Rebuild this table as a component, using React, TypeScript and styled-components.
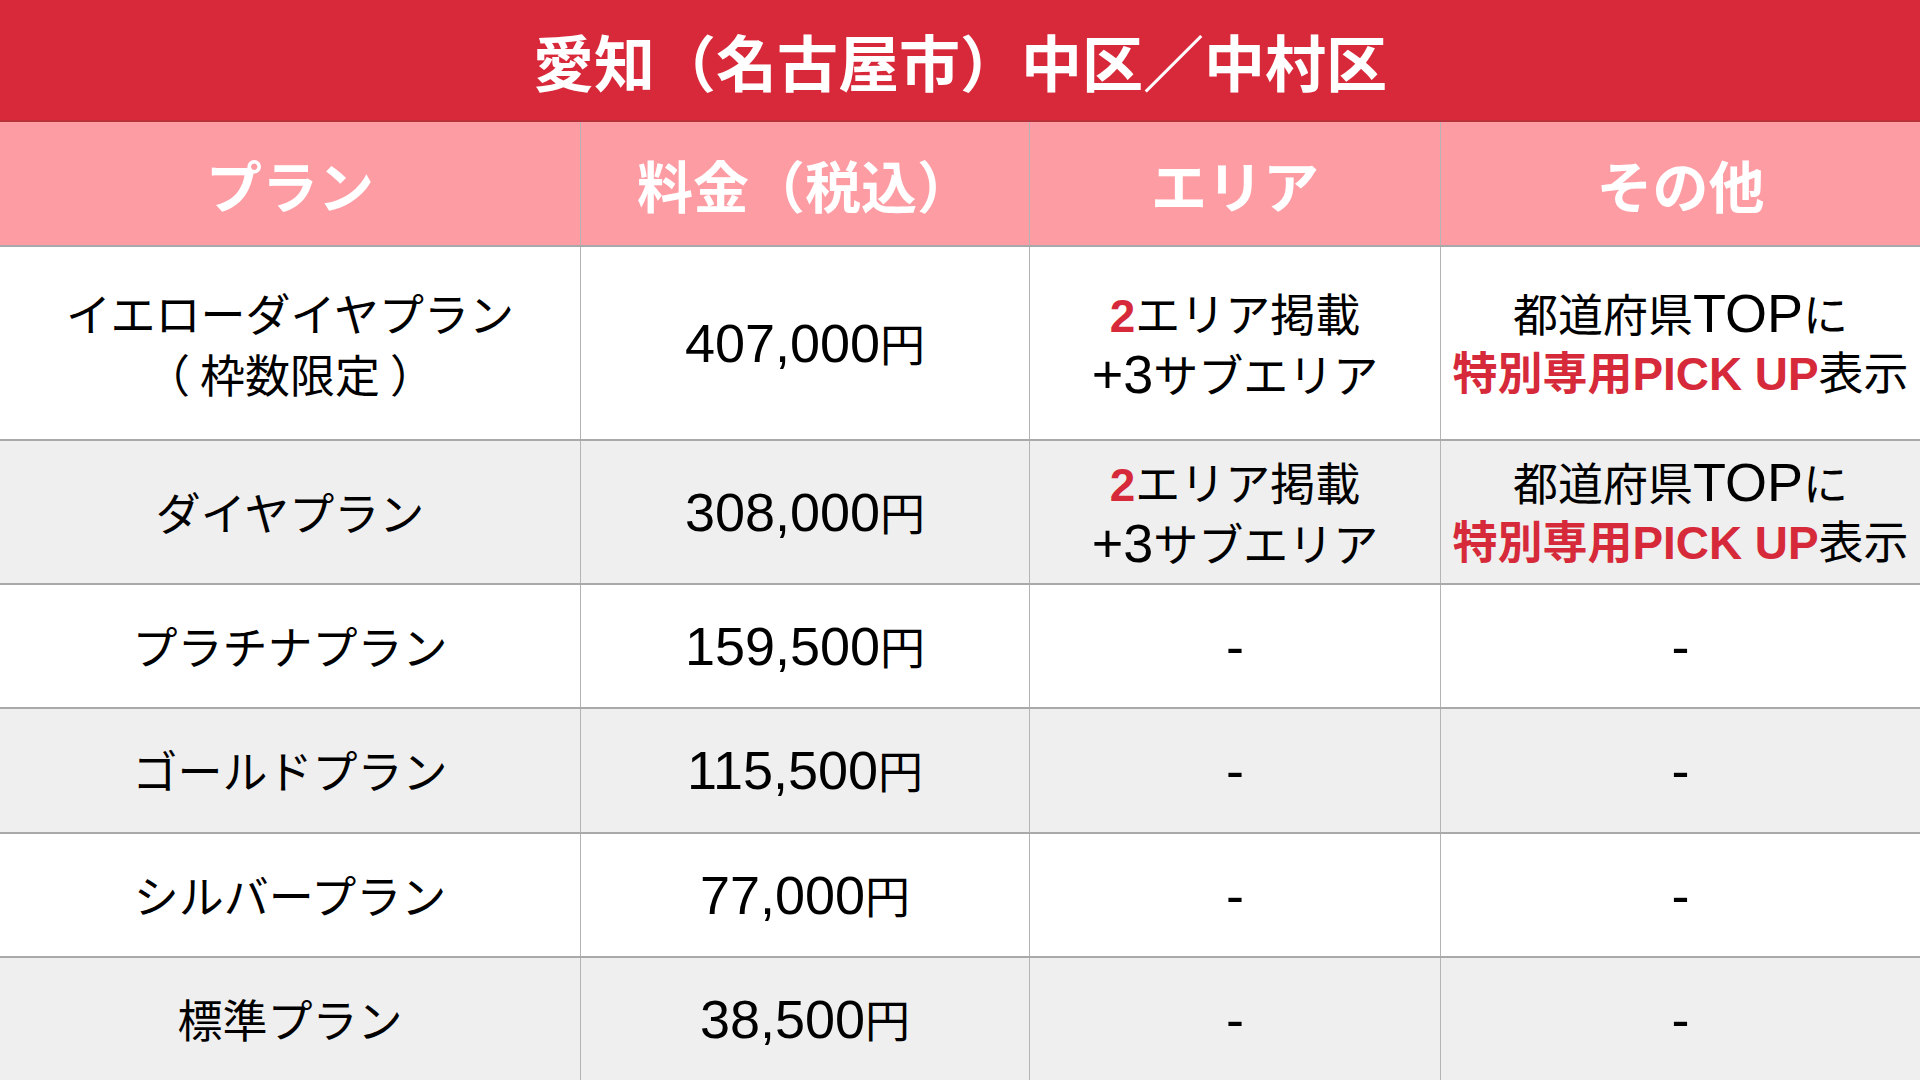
import styled, { createGlobalStyle } from "styled-components";

const GlobalStyle = createGlobalStyle`
  html, body {
    margin: 0;
    padding: 0;
  }
  body {
    width: 1920px;
    height: 1080px;
    overflow: hidden;
    background: #ffffff;
    font-family: "Noto Sans CJK JP", "Liberation Sans", sans-serif;
    color: #000;
  }
`;

const Sheet = styled.div`
  width: 1920px;
  height: 1080px;
  display: flex;
  flex-direction: column;
`;

const Title = styled.h1`
  margin: 0;
  height: 122px;
  flex: none;
  box-sizing: border-box;
  display: flex;
  align-items: center;
  justify-content: center;
  background: #d8293a;
  border-bottom: 2px solid #b9303b;
  color: #fff;
  font-family: "Noto Sans CJK JP", sans-serif;
  font-weight: 700;
  font-size: 61px;
`;

const Row = styled.div<{ $height: string; $tone: "head" | "white" | "gray" }>`
  display: grid;
  grid-template-columns: 580px 449px 411px 1fr;
  flex: ${(p) => (p.$height === "auto" ? "1" : "none")};
  height: ${(p) => (p.$height === "auto" ? "auto" : p.$height)};
  box-sizing: border-box;
  border-bottom: 2px solid #a9a9a9;
  background: ${(p) =>
    p.$tone === "head" ? "#fe9ca4" : p.$tone === "gray" ? "#efefef" : "#ffffff"};
  color: ${(p) => (p.$tone === "head" ? "#ffffff" : "#000000")};

  &:last-child {
    border-bottom: none;
  }
`;

const Cell = styled.div<{ $head?: boolean }>`
  display: flex;
  flex-direction: column;
  align-items: center;
  justify-content: center;
  text-align: center;
  white-space: nowrap;
  box-sizing: border-box;
  font-size: ${(p) => (p.$head ? "56px" : "45px")};
  font-weight: ${(p) => (p.$head ? 700 : 400)};

  & + & {
    border-left: 1px solid ${(p) => (p.$head ? "#e98d95" : "#b4b4b4")};
  }
`;

const Line = styled.span<{ $tall?: boolean }>`
  display: block;
  line-height: ${(p) => (p.$tall ? "61px" : "58px")};
`;

// bracket with the looser spacing of the original slide font
const Paren = styled.span<{ $side: "open" | "close" }>`
  ${(p) => (p.$side === "open" ? "margin-right: 0.22em;" : "margin-left: 0.22em;")}
`;

const En = styled.span`
  font-family: "Liberation Sans", sans-serif;
  font-size: 1.2em;
`;

const Accent = styled.span`
  color: #d62a3a;
  font-weight: 700;

  ${En} {
    font-size: 1.02em;
  }
`;

const areaText = (
  <>
    <Line>
      <Accent>
        <En>2</En>
      </Accent>
      エリア掲載
    </Line>
    <Line>
      <En>+3</En>サブエリア
    </Line>
  </>
);

const otherText = (
  <>
    <Line>
      都道府県<En>TOP</En>に
    </Line>
    <Line>
      <Accent>
        特別専用<En>PICK UP</En>
      </Accent>
      表示
    </Line>
  </>
);

const simplePlans = [
  { name: "プラチナプラン", price: "159,500", tone: "white" as const },
  { name: "ゴールドプラン", price: "115,500", tone: "gray" as const },
  { name: "シルバープラン", price: "77,000", tone: "white" as const },
  { name: "標準プラン", price: "38,500", tone: "gray" as const },
];

export default function App() {
  return (
    <>
      <GlobalStyle />
      <Sheet>
        <Title>愛知（名古屋市）中区／中村区</Title>

        <Row $height="125px" $tone="head">
          <Cell $head>プラン</Cell>
          <Cell $head>料金（税込）</Cell>
          <Cell $head>エリア</Cell>
          <Cell $head>その他</Cell>
        </Row>

        <Row $height="194px" $tone="white">
          <Cell>
            <Line $tall>イエローダイヤプラン</Line>
            <Line $tall>
              <Paren $side="open">（</Paren>枠数限定<Paren $side="close">）</Paren>
            </Line>
          </Cell>
          <Cell>
            <Line>
              <En>407,000</En>円
            </Line>
          </Cell>
          <Cell>{areaText}</Cell>
          <Cell>{otherText}</Cell>
        </Row>

        <Row $height="144px" $tone="gray">
          <Cell>
            <Line>ダイヤプラン</Line>
          </Cell>
          <Cell>
            <Line>
              <En>308,000</En>円
            </Line>
          </Cell>
          <Cell>{areaText}</Cell>
          <Cell>{otherText}</Cell>
        </Row>

        {simplePlans.map((plan) => (
          <Row key={plan.name} $height="auto" $tone={plan.tone}>
            <Cell>
              <Line>{plan.name}</Line>
            </Cell>
            <Cell>
              <Line>
                <En>{plan.price}</En>円
              </Line>
            </Cell>
            <Cell>
              <Line>
                <En>-</En>
              </Line>
            </Cell>
            <Cell>
              <Line>
                <En>-</En>
              </Line>
            </Cell>
          </Row>
        ))}
      </Sheet>
    </>
  );
}
